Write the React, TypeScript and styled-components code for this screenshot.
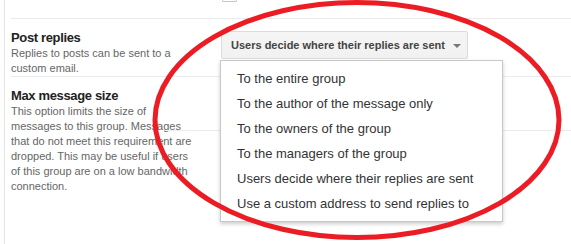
import styled, { createGlobalStyle } from 'styled-components'

const GlobalStyle = createGlobalStyle`
  html, body {
    margin: 0;
    padding: 0;
    background: #fff;
  }
  body {
    font-family: "Liberation Sans", Arial, sans-serif;
  }
`

const replyOptions = [
  'To the entire group',
  'To the author of the message only',
  'To the owners of the group',
  'To the managers of the group',
  'Users decide where their replies are sent',
  'Use a custom address to send replies to',
]

export default function App() {
  return (
    <>
      <GlobalStyle />
      <Page>
        <Frame>
          <TopRow>
            <span />
            <TopValue>
              <Checkbox />
              <CheckLabel>Allow posting by email</CheckLabel>
            </TopValue>
          </TopRow>

          <SettingRow $divider>
            <LabelCell>
              <SettingTitle>Post replies</SettingTitle>
              <SettingHint>Replies to posts can be sent to a custom email.</SettingHint>
            </LabelCell>
            <ValueCell>
              <Dropdown>
                <DropButton>
                  Users decide where their replies are sent
                  <Caret />
                </DropButton>
                <Menu>
                  {replyOptions.map((opt) => (
                    <MenuItem key={opt}>{opt}</MenuItem>
                  ))}
                </Menu>
              </Dropdown>
            </ValueCell>
          </SettingRow>

          <SettingRow>
            <LabelCell>
              <SettingTitle>Max message size</SettingTitle>
              <SettingHint>
                This option limits the size of messages to this group. Messages that do not meet
                this requirement are dropped. This may be useful if users of this group are on a
                low bandwidth connection.
              </SettingHint>
            </LabelCell>
            <ValueCell $flush>
              <SubRule />
            </ValueCell>
          </SettingRow>
        </Frame>

        <Annotation width="571" height="244" viewBox="0 0 571 244">
          <ellipse cx="357" cy="120" rx="202" ry="117.5" fill="none" stroke="#ec1c24" strokeWidth="5" />
        </Annotation>
      </Page>
    </>
  )
}

const Page = styled.div`
  position: relative;
  width: 571px;
  height: 244px;
  overflow: hidden;
`
const Frame = styled.div`
  margin-left: 4px;
  height: 100%;
  border-left: 1px solid #e5e5e5;
  padding-left: 6px;
`
// ---------------------------------
const TopRow = styled.div`
  display: grid;
  grid-template-columns: 156px 1fr;
  height: 18px;
  overflow: hidden;
  border-bottom: 1px solid #ebebeb;
`
const TopValue = styled.div`
  display: flex;
  align-items: center;
  gap: 9px;
  padding-left: 55px;
  margin-top: -13px;
  height: 15px;
`
const Checkbox = styled.span`
  width: 13px;
  height: 13px;
  border: 1px solid #c6c6c6;
  border-radius: 1px;
  background: #fff;
`
const CheckLabel = styled.span`
  font-size: 13px;
  color: #333;
  line-height: 15px;
  position: relative;
  top: -3px;
`
// ---------------------------------
const SettingRow = styled.div<{ $divider?: boolean }>`
  display: grid;
  grid-template-columns: 156px 1fr;
  border-bottom: ${(p) => (p.$divider ? '1px solid #ebebeb' : 'none')};
`
const LabelCell = styled.div`
  padding-top: 10px;
`
const SettingTitle = styled.div`
  font-size: 13px;
  font-weight: 700;
  letter-spacing: -0.35px;
  line-height: 17px;
  color: #222;
`
const SettingHint = styled.div`
  width: 185px;
  font-size: 11px;
  line-height: 15px;
  color: #666;
`
const ValueCell = styled.div<{ $flush?: boolean }>`
  padding: ${(p) => (p.$flush ? '0' : '12px 0 0 54px')};
`
const SubRule = styled.div`
  height: 53px;
  border-bottom: 1px solid #ebebeb;
`
// ---------------------------------
const Dropdown = styled.div`
  position: relative;
  z-index: 2;
  width: fit-content;
`
const DropButton = styled.div`
  box-sizing: border-box;
  display: inline-flex;
  align-items: center;
  gap: 8px;
  height: 28px;
  padding: 0 6px 0 9px;
  border: 1px solid #dcdcdc;
  border-radius: 2px;
  background: linear-gradient(#f5f5f5, #f1f1f1);
  font-size: 11px;
  font-weight: 700;
  color: #444;
  white-space: nowrap;
`
const Caret = styled.span`
  width: 0;
  height: 0;
  border-left: 4px solid transparent;
  border-right: 4px solid transparent;
  border-top: 4px solid #777;
  margin-top: 2px;
`
const Menu = styled.ul`
  position: absolute;
  top: 29px;
  left: -1px;
  box-sizing: border-box;
  width: 283px;
  margin: 0;
  padding: 5px 0;
  list-style: none;
  background: #fff;
  border: 1px solid #c8c8c8;
  box-shadow: 0 2px 4px rgba(0, 0, 0, 0.2);
`
const MenuItem = styled.li`
  padding: 0 16px;
  height: 25px;
  line-height: 25px;
  font-size: 13px;
  color: #333;
  white-space: nowrap;
`
// ---------------------------------
const Annotation = styled.svg`
  position: absolute;
  top: 0;
  left: 0;
  z-index: 3;
  pointer-events: none;
`
